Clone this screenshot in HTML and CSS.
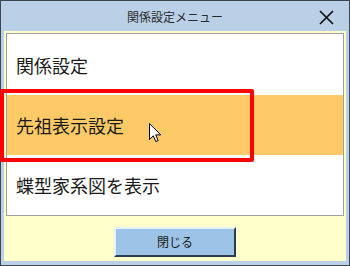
FILE: index.html
```html
<!DOCTYPE html>
<html lang="ja">
<head>
<meta charset="utf-8">
<link rel="stylesheet" href="styles.css">
</head>
<body>
<div class="window">
  <div class="titlebar">
    <span class="title">関係設定メニュー</span>
    <svg class="close" width="15" height="15" viewBox="0 0 15 15"><path d="M1 1 L14 14 M14 1 L1 14" stroke="#111" stroke-width="1.7" fill="none"/></svg>
  </div>
  <div class="frame">
    <div class="panel">
      <div class="list">
        <div class="item first">関係設定</div>
        <div class="item selected">先祖表示設定</div>
        <div class="item">蝶型家系図を表示</div>
      </div>
      <div class="actions">
        <div class="button">閉じる</div>
      </div>
    </div>
  </div>
</div>
<div class="highlight-box"></div>
<svg class="cursor" width="13" height="20" viewBox="0 0 13 20"><path d="M0.5 0.5 L0.5 16.5 L4.3 12.8 L6.8 18.6 L9.2 17.6 L6.7 11.9 L11.8 11.9 Z" fill="#fff" stroke="#000" stroke-width="1" stroke-linejoin="miter"/></svg>
</body>
</html>
```
FILE: styles.css
```css
html, body {
  margin: 0;
  padding: 0;
  width: 350px;
  height: 266px;
  overflow: hidden;
  background: #ffffff;
}
body {
  position: relative;
  font-family: "Noto Sans CJK JP", "Noto Sans", sans-serif;
  color: #1a1a1a;
}
.window {
  width: 348px;
  height: 264px;
  border: 1px solid #3e4650;
  background: #bad0e6;
  display: flex;
  flex-direction: column;
}
.titlebar {
  height: 30px;
  position: relative;
  display: flex;
  align-items: center;
  justify-content: center;
}
.title {
  font-size: 12px;
  color: #2a2a2a;
  line-height: 1;
  margin-top: 1px;
}
.close {
  position: absolute;
  left: 318px;
  top: 9px;
}
.frame {
  flex: 1;
  padding: 0 3px 4px 3px;
  display: flex;
}
.panel {
  flex: 1;
  background: #ffffcc;
  padding: 2px 2px 0 2px;
  display: flex;
  flex-direction: column;
}
.list {
  border: 1px solid #a0a0a0;
  background: #ffffff;
  height: 181px;
  display: flex;
  flex-direction: column;
}
.item {
  height: 60px;
  display: flex;
  align-items: center;
  padding-left: 9px;
  font-size: 18px;
  line-height: 1;
}
.item.first {
  height: 61px;
}
.item.selected {
  background: #fdca67;
}
.actions {
  display: flex;
  justify-content: center;
  margin-top: 11px;
}
.button {
  width: 118px;
  height: 26px;
  background: #9dc3e6;
  border-top: 2px solid #e6f2fb;
  border-left: 2px solid #e6f2fb;
  border-right: 2px solid #2e3d4d;
  border-bottom: 2px solid #2e3d4d;
  display: flex;
  align-items: center;
  justify-content: center;
  font-size: 12px;
  color: #1a1a1a;
  line-height: 1;
}
.highlight-box {
  position: absolute;
  left: 0;
  top: 89px;
  width: 246px;
  height: 65px;
  border: 4px solid #ff0000;
  border-radius: 2px;
}
.cursor {
  position: absolute;
  left: 149px;
  top: 123px;
}
```
